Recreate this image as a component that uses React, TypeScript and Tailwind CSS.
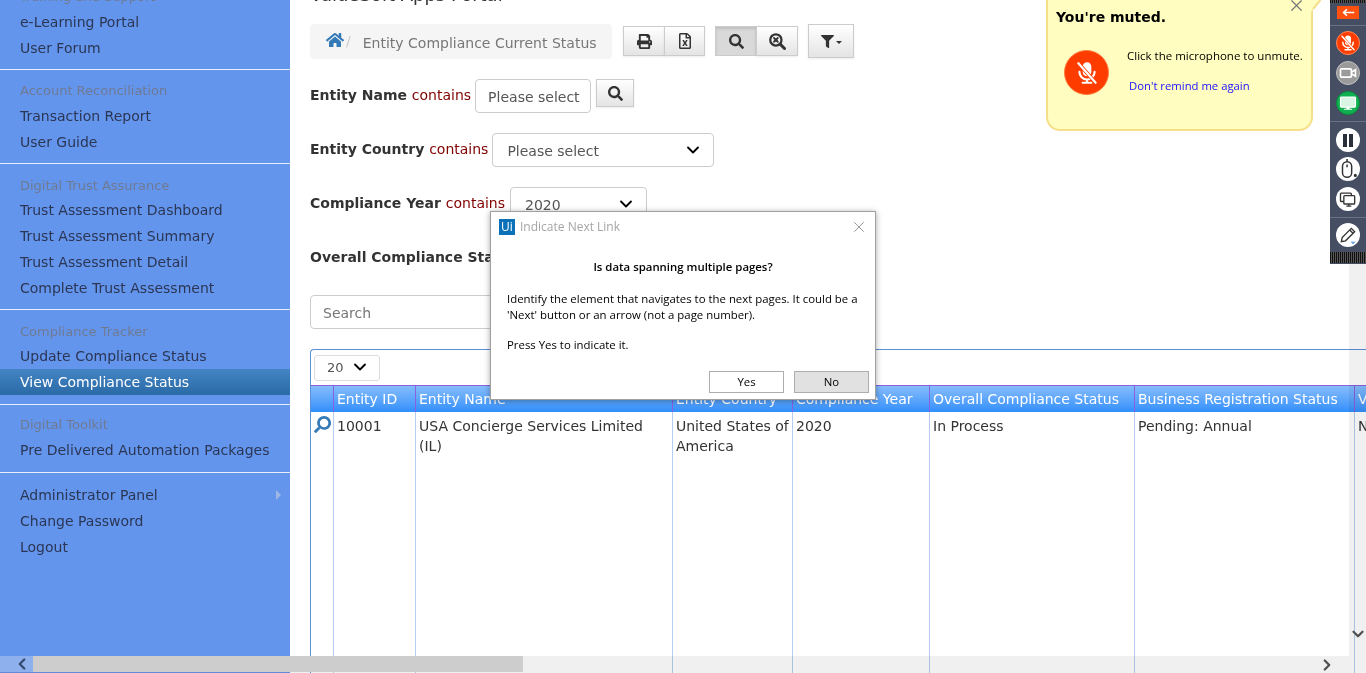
import { ChevronDown, ChevronLeft, ChevronRight, X } from "lucide-react";
import { FaHome, FaPrint, FaRegFileExcel, FaSearch, FaFilter } from "react-icons/fa";

const menu = [
  { heading: "Training and Support", items: ["e-Learning Portal", "User Forum"], box: "pt-[8px] pb-[8px]", title: "h-[25px]" },
  { heading: "Account Reconciliation", items: ["Transaction Report", "User Guide"], box: "pt-[8px] pb-[8px]", title: "h-[25px]" },
  {
    heading: "Digital Trust Assurance",
    items: ["Trust Assessment Dashboard", "Trust Assessment Summary", "Trust Assessment Detail", "Complete Trust Assessment"],
    box: "pt-[8px] pb-[8px]",
    title: "h-[25px] pt-[2px]",
  },
  { heading: "Compliance Tracker", items: ["Update Compliance Status", "View Compliance Status"], box: "pt-[8px] pb-[9px]", title: "h-[25px] pt-[2px]" },
  { heading: "Digital Toolkit", items: ["Pre Delivered Automation Packages"], box: "pt-[8px] pb-[9px]", title: "h-[24px]" },
];

const columns = [
  { title: "", width: "w-[23px]" },
  { title: "Entity ID", width: "w-[82px]" },
  { title: "Entity Name", width: "w-[257px]" },
  { title: "Entity Country", width: "w-[120px]" },
  { title: "Compliance Year", width: "w-[137px]" },
  { title: "Overall Compliance Status", width: "w-[205px]" },
  { title: "Business Registration Status", width: "w-[220px]" },
  { title: "Vendor", width: "w-[100px]" },
];

const row = ["", "10001", "USA Concierge Services Limited (IL)", "United States of America", "2020", "In Process", "Pending: Annual", "N"];

function MutedMic({ className }: { className: string }) {
  return (
    <svg viewBox="0 0 24 24" fill="none" stroke="white" strokeWidth="2" strokeLinecap="round" className={className}>
      <rect x="9" y="3" width="6" height="11" rx="3" fill="white" />
      <path d="M5 11a7 7 0 0 0 14 0M12 18v3M8 21h8" />
      <path d="M4 3l16 18" stroke="#ff3c00" strokeWidth="3.5" />
      <path d="M4 3l16 18" />
    </svg>
  );
}

function RoundButton({ className, children }: { className: string; children: React.ReactNode }) {
  return <div className={`w-6 h-6 rounded-full flex items-center justify-center ${className}`}>{children}</div>;
}

function Field({ label, children }: { label: string; children: React.ReactNode }) {
  return (
    <div className="h-[54px] flex items-start gap-[5px] text-[14px]">
      <span className="mt-[6px] font-bold text-[#333] leading-5 whitespace-nowrap">
        {label} <span className="font-normal text-[#800000]">contains</span>
      </span>
      {children}
    </div>
  );
}

function Select({ value, width, className }: { value: string; width: string; className?: string }) {
  return (
    <div className={`h-[34px] ${width} ${className ?? ""} border border-[#ccc] rounded-[4px] bg-white pl-[14px] pr-[10px] flex items-center justify-between text-[#555]`}>
      <span className="mt-[2px]">{value}</span>
      <ChevronDown size={20} strokeWidth={2.2} className="text-black" />
    </div>
  );
}

function ToolButton({ className, children }: { className: string; children: React.ReactNode }) {
  return (
    <div className={`h-[30px] flex items-center justify-center border border-[#ccc] bg-gradient-to-b from-white to-[#e4e4e4] text-[#333] shadow-[0_1px_2px_rgba(0,0,0,0.08)] ${className}`}>
      {children}
    </div>
  );
}

export default function App() {
  return (
    <div className="relative w-[1366px] h-[673px] overflow-hidden bg-white font-['DejaVu_Sans',sans-serif] text-[14px] text-[#333]">
      <div className="flex h-full">
        {/* Sidebar */}
        <aside className="w-[290px] shrink-0 bg-[#6495ed] text-[#2b3654] overflow-hidden">
          <div className="-mt-[24px]">
            {menu.map((group) => (
              <div key={group.heading} className={`border-b border-[#e8eefb] ${group.box}`}>
                <div className={`${group.title} pl-5 flex items-center text-[13px] text-[#6f7a92] whitespace-nowrap`}>{group.heading}</div>
                {group.items.map((item) => (
                  <div
                    key={item}
                    className={`h-[26px] pl-5 flex items-center whitespace-nowrap ${
                      item === "View Compliance Status" ? "bg-gradient-to-b from-[#4384c4] to-[#2a6aa6] text-white" : ""
                    }`}
                  >
                    {item}
                  </div>
                ))}
              </div>
            ))}
            <div className="pt-[9px]">
              <div className="h-[26px] pl-5 pr-[9px] flex items-center justify-between">
                Administrator Panel
                <span className="w-0 h-0 border-y-[5px] border-y-transparent border-l-[5px] border-l-[#9db6e4]" />
              </div>
              <div className="h-[26px] pl-5 flex items-center">Change Password</div>
              <div className="h-[26px] pl-5 flex items-center">Logout</div>
            </div>
          </div>
        </aside>

        {/* Main */}
        <main className="flex-1 min-w-0 pl-5">
          <div className="-mt-[19px] h-[43px] leading-[28px] text-[18px] text-[#333] whitespace-nowrap">ValueSoft Apps Portal</div>

          <div className="flex items-start">
            <div className="w-[302px] h-[35px] bg-[#f5f5f5] rounded-[4px] pl-[16px] flex items-center text-[#777] whitespace-nowrap">
              <FaHome size={18} className="text-[#337ab7] -mt-[4px]" />
              <span className="ml-[2px] mr-[12px] text-[#ccc]">/</span>
              <span className="mt-[3px]">Entity Compliance Current Status</span>
            </div>
            <ToolButton className="ml-[11px] mt-[2px] w-[42px]"><FaPrint size={15} /></ToolButton>
            <ToolButton className="mt-[2px] w-[41px] -ml-px"><FaRegFileExcel size={16} /></ToolButton>
            <ToolButton className="ml-[10px] mt-[2px] w-[42px] !bg-none bg-[#d9d9d9] shadow-[inset_0_2px_3px_rgba(0,0,0,0.12)]"><FaSearch size={15} /></ToolButton>
            <ToolButton className="mt-[2px] w-[42px] -ml-px">
              <svg viewBox="0 0 24 24" fill="none" stroke="#333" strokeWidth="3" strokeLinecap="round" className="w-[18px] h-[18px]">
                <circle cx="10.5" cy="10.5" r="7.5" />
                <path d="M16.5 16.5L22 22" strokeWidth="4" />
                <path d="M8 8l5 5M13 8l-5 5" strokeWidth="2.4" />
              </svg>
            </ToolButton>
            <ToolButton className="ml-[10px] !h-[34px] w-[46px]">
              <FaFilter size={13} />
              <span className="ml-[2px] mt-[3px] w-0 h-0 border-x-[3px] border-x-transparent border-t-[3px] border-t-[#333]" />
            </ToolButton>
          </div>

          <div className="mt-[20px]">
            <Field label="Entity Name">
              <div className="-ml-px h-[34px] w-[116px] border border-[#ccc] rounded-[4px] px-3 flex items-center text-[#555] whitespace-nowrap">
                <span className="mt-[2px]">Please select</span>
              </div>
              <ToolButton className="!h-[28px] w-[38px]"><FaSearch size={15} /></ToolButton>
            </Field>
            <Field label="Entity Country"><Select value="Please select" width="w-[222px]" className="-ml-px" /></Field>
            <Field label="Compliance Year"><Select value="2020" width="w-[137px]" /></Field>
            <Field label="Overall Compliance Status"><Select value="" width="w-[137px]" /></Field>
          </div>

          <div className="h-[34px] w-[300px] border border-[#ccc] rounded-[4px] px-3 flex items-center text-[#777]">
            <span className="mt-[2px]">Search</span>
          </div>

          {/* Table */}
          <div className="mt-[20px] w-[1100px] h-[324px] border border-[#5b8fd6] border-b-0 rounded-tl-[4px] border-r-0">
            <div className="h-[35px] px-[3px] flex items-center">
              <div className="h-[26px] w-[66px] border border-[#ddd] rounded-[3px] pl-[12px] pr-[9px] flex items-center justify-between text-[13px] text-[#555]">
                20
                <ChevronDown size={20} strokeWidth={2.2} className="text-black -mt-[1px]" />
              </div>
            </div>
            <div className="flex h-full">
              {columns.map((col, i) => (
                <div key={col.title} className={`${col.width} shrink-0 border-r border-[#b4cdf0]`}>
                  <div className="h-[27px] px-[3px] flex items-center bg-gradient-to-b from-[#85bcfb] to-[#2f8ffb] text-white whitespace-nowrap border-r border-[#8a5fe0] -mr-px border-t border-t-[#8a5fe0]">
                    {col.title}
                  </div>
                  <div className="px-[3px] pt-[4px] leading-[20px] text-[#333]">
                    {i === 0 ? <FaSearch size={17} className="text-[#337ab7] -scale-x-100" /> : row[i]}
                  </div>
                </div>
              ))}
            </div>
          </div>
        </main>
      </div>

      {/* Window scrollbars */}
      <div className="absolute right-0 top-0 bottom-0 w-[17px] bg-[#f0f0f0] mix-blend-multiply" />
      <div className="absolute left-0 right-[17px] bottom-0 h-[17px] bg-[#f0f0f0] mix-blend-multiply" />
      <ChevronDown size={18} strokeWidth={3} className="absolute left-[1349px] top-[625px] text-[#505050]" />
      <div className="absolute left-0 bottom-0 w-[523px] h-[17px] flex">
        <div className="w-[33px] h-[16px] bg-[#8eb0ec] flex items-center justify-center">
          <ChevronLeft size={18} strokeWidth={3} className="text-[#34496f] ml-[10px]" />
        </div>
        <div className="flex-1 h-[16px] bg-[#cdcdcd]" />
      </div>
      <ChevronRight size={18} strokeWidth={3} className="absolute left-[1318px] top-[656px] text-[#505050]" />

      {/* Uipath dialog */}
      <div className="absolute left-[490px] top-[211px] w-[386px] h-[189px] bg-white border border-[#a0a0a0] shadow-[0_1px_6px_rgba(0,0,0,0.35)] font-['Open_Sans',sans-serif] text-[11.4px] text-black">
        <div className="h-[30px] flex items-center pl-[8px] pr-[7px]">
          <div className="w-4 h-4 bg-[#0a70b8] text-white text-[12px] leading-4 text-center">Ui</div>
          <span className="ml-[5px] text-[12px] text-[#a5a5a5]">Indicate Next Link</span>
          <X size={18} strokeWidth={1} className="ml-auto text-[#777]" />
        </div>
        <div className="mt-[17px] text-center font-semibold leading-[16px]">Is data spanning multiple pages?</div>
        <div className="mt-[16px] ml-[16px] leading-[16px] whitespace-nowrap">
          Identify the element that navigates to the next pages. It could be a
          <br />
          'Next' button or an arrow (not a page number).
        </div>
        <div className="mt-[14px] ml-[16px] leading-[16px]">Press Yes to indicate it.</div>
        <div className="absolute right-[6px] bottom-[6px] flex gap-[10px]">
          <div className="w-[75px] h-[22px] border border-[#adadad] flex items-center justify-center">Yes</div>
          <div className="w-[75px] h-[22px] border border-[#adadad] bg-[#e1e1e1] flex items-center justify-center">No</div>
        </div>
      </div>

      {/* Muted tooltip */}
      <div className="absolute left-[1046px] -top-[20px] w-[267px] h-[151px] bg-[#fffdc0] border-2 border-[#f5df8a] rounded-[14px] font-['Open_Sans',sans-serif] text-[11.5px] text-black">
        <X size={19} strokeWidth={1.5} className="absolute right-[5px] top-[14px] text-[#777]" />
        <div className="absolute left-[8px] top-[25px] font-['DejaVu_Sans',sans-serif] font-bold text-[14px]">You're muted.</div>
        <div className="absolute left-[16px] top-[68px] w-[45px] h-[45px] rounded-full bg-[#ff3c00] border border-[#ff7a3c] flex items-center justify-center">
          <MutedMic className="w-[26px] h-[26px]" />
        </div>
        <div className="absolute left-[79px] top-[65px] whitespace-nowrap">Click the microphone to unmute.</div>
        <div className="absolute left-[81px] top-[96px] whitespace-nowrap text-[11.3px] text-[#1a10ff]">Don't remind me again</div>
      </div>
      <svg viewBox="0 0 10 12" className="absolute left-[1311px] top-0 w-[10px] h-[12px]">
        <polygon points="0,0 9,0 2,9 0,12" fill="#fffdc0" />
        <path d="M9.5 0L2 9" stroke="#f5df8a" strokeWidth="2" fill="none" />
      </svg>

      {/* Recorder toolbar */}
      <div className="absolute left-[1330px] top-0 w-[36px] h-[264px] bg-[#454e62] flex flex-col items-center">
        <div className="h-[3px] w-full bg-[repeating-linear-gradient(90deg,#111_0,#111_1px,#555_1px,#555_2px)]" />
        <div className="mt-[3px] w-[22px] h-[13px] bg-[#ff5010] flex items-center justify-center">
          <svg viewBox="0 0 16 10" fill="none" stroke="white" strokeWidth="2" className="w-[13px] h-[9px]">
            <path d="M15 5H2M6 1L2 5l4 4" />
          </svg>
        </div>
        <div className="mt-[6px] w-full h-px bg-[#6a7286]" />
        <RoundButton className="mt-[5px] bg-[#ff3c00] border border-[#ff8a60]"><MutedMic className="w-[18px] h-[18px]" /></RoundButton>
        <RoundButton className="mt-[6px] bg-[#9a9a9a] border border-[#c0c0c0]">
          <svg viewBox="0 0 24 24" fill="none" stroke="white" strokeWidth="2" className="w-[20px] h-[20px]">
            <rect x="3" y="7" width="13" height="10" rx="1" />
            <path d="M16 11l5-3v8l-5-3" />
          </svg>
        </RoundButton>
        <RoundButton className="mt-[6px] bg-[#0fb04f] border border-[#0a8a3c]">
          <svg viewBox="0 0 24 24" className="w-[20px] h-[20px]">
            <rect x="3" y="5" width="18" height="12" rx="1" fill="#d8f5e4" stroke="white" strokeWidth="1.4" />
            <path d="M10 17h4v2h3v1H7v-1h3z" fill="white" />
          </svg>
        </RoundButton>
        <div className="mt-[6px] w-full h-px bg-[#6a7286]" />
        <RoundButton className="mt-[6px] bg-white">
          <div className="flex gap-[2px]">
            <span className="w-[4px] h-[13px] bg-[#2a2f3a]" />
            <span className="w-[4px] h-[13px] bg-[#2a2f3a]" />
          </div>
        </RoundButton>
        <RoundButton className="mt-[5px] bg-white">
          <svg viewBox="0 0 24 24" fill="none" stroke="#333" strokeWidth="1.6" className="w-[22px] h-[22px]">
            <rect x="6" y="4" width="10" height="17" rx="5" />
            <path d="M11 4V1M11 7v3" />
            <circle cx="20" cy="19" r="0.9" fill="#333" />
          </svg>
        </RoundButton>
        <RoundButton className="mt-[6px] bg-white">
          <svg viewBox="0 0 24 24" fill="none" stroke="#333" strokeWidth="1.6" className="w-[20px] h-[20px]">
            <rect x="3" y="5" width="13" height="10" rx="1" />
            <rect x="7" y="8" width="13" height="10" rx="1" fill="white" />
            <path d="M13 18v2M10 20.5h6" />
          </svg>
        </RoundButton>
        <div className="mt-[6px] w-full h-px bg-[#6a7286]" />
        <RoundButton className="mt-[5px] bg-white">
          <svg viewBox="0 0 24 24" fill="none" stroke="#333" strokeWidth="1.6" className="w-[20px] h-[20px]">
            <path d="M4 20l1-5L16 4l4 4L9 19z" />
            <path d="M14 6l4 4" />
            <path d="M15 20h6l-3 3z" fill="#5aa0e0" stroke="none" />
          </svg>
        </RoundButton>
        <div className="mt-auto mb-px h-[11px] w-full bg-[repeating-linear-gradient(90deg,#111_0,#111_1px,#555_1px,#555_2px)]" />
      </div>
    </div>
  );
}
